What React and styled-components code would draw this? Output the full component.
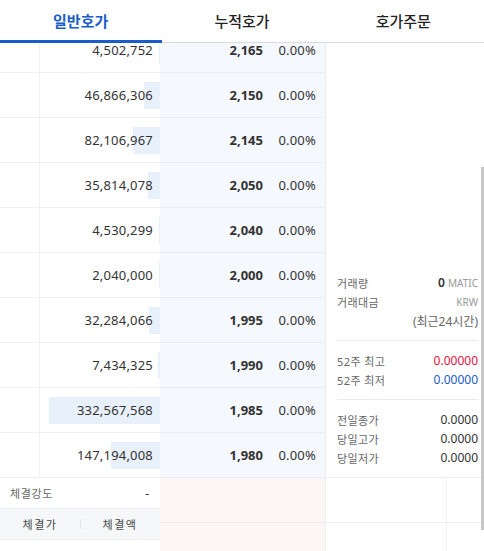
import React from "react";
import styled, { createGlobalStyle } from "styled-components";

const GlobalStyle = createGlobalStyle`
  html, body {
    margin: 0;
    padding: 0;
    background: #fff;
  }
  body {
    font-family: "Noto Sans", "Noto Sans CJK KR", sans-serif;
    color: #333;
  }
`;

const rows = [
  { qty: 4502752, price: "2,165" },
  { qty: 46866306, price: "2,150" },
  { qty: 82106967, price: "2,145" },
  { qty: 35814078, price: "2,050" },
  { qty: 4530299, price: "2,040" },
  { qty: 2040000, price: "2,000" },
  { qty: 32284066, price: "1,995" },
  { qty: 7434325, price: "1,990" },
  { qty: 332567568, price: "1,985" },
  { qty: 147194008, price: "1,980" },
];

const maxQty = Math.max(...rows.map((r) => r.qty));

const App = () => {
  return (
    <Wrap>
      <GlobalStyle />
      <Tabs>
        <Tab active>일반호가</Tab>
        <Tab>누적호가</Tab>
        <Tab>호가주문</Tab>
      </Tabs>

      <Body>
        <AskColumn>
          <List>
            {rows.map((r, i) => (
              <AskRow key={i}>
                <EmptyCell />
                <QtyCell>
                  <Bar style={{ width: `${(r.qty / maxQty) * 111}px` }} />
                  <QtyText>{r.qty.toLocaleString("en-US")}</QtyText>
                </QtyCell>
              </AskRow>
            ))}
          </List>
        </AskColumn>

        <PriceColumn>
          <List>
            {rows.map((r, i) => (
              <PriceRow key={i}>
                <Price>{r.price}</Price>
                <Rate>0.00%</Rate>
              </PriceRow>
            ))}
          </List>
        </PriceColumn>

        <InfoColumn>
          <InfoBlock>
            <InfoLine>
              <Label>거래량</Label>
              <Value>
                <Strong>0</Strong> <Unit>MATIC</Unit>
              </Value>
            </InfoLine>
            <InfoLine>
              <Label>거래대금</Label>
              <Value>
                <Unit>KRW</Unit>
              </Value>
            </InfoLine>
            <InfoLine>
              <span />
              <Note>(최근24시간)</Note>
            </InfoLine>
          </InfoBlock>
          <InfoBlock>
            <InfoLine>
              <Label>52주 최고</Label>
              <Value tone="up">0.00000</Value>
            </InfoLine>
            <InfoLine>
              <Label>52주 최저</Label>
              <Value tone="down">0.00000</Value>
            </InfoLine>
          </InfoBlock>
          <InfoBlock>
            <InfoLine>
              <Label>전일종가</Label>
              <Value>0.0000</Value>
            </InfoLine>
            <InfoLine>
              <Label>당일고가</Label>
              <Value>0.0000</Value>
            </InfoLine>
            <InfoLine>
              <Label>당일저가</Label>
              <Value>0.0000</Value>
            </InfoLine>
          </InfoBlock>
        </InfoColumn>
      </Body>

      <Bottom>
        <TradeColumn>
          <StrengthRow>
            <StrengthLabel>체결강도</StrengthLabel>
            <span>-</span>
          </StrengthRow>
          <TradeHead>
            <HeadCell>체결가</HeadCell>
            <HeadCell divided>체결액</HeadCell>
          </TradeHead>
        </TradeColumn>
        <BidColumn>
          <BidRow />
          <BidRow />
        </BidColumn>
        <SideColumn>
          <SideRow>
            <SideCell />
            <SideCell />
          </SideRow>
          <SideRow>
            <SideCell />
            <SideCell />
          </SideRow>
        </SideColumn>
      </Bottom>

      <ScrollThumb />
    </Wrap>
  );
};

export default App;

const Wrap = styled.div`
  position: relative;
  width: 484px;
  height: 551px;
  overflow: hidden;
  background: #fff;
`;

const Tabs = styled.div`
  display: grid;
  grid-template-columns: repeat(3, 1fr);
  height: 42px;
  border-bottom: 1px solid #d9dbe0;
`;

const Tab = styled.div`
  position: relative;
  display: flex;
  align-items: center;
  justify-content: center;
  padding-bottom: 1px;
  font-size: 15px;
  font-weight: ${(p) => (p.active ? 700 : 500)};
  color: ${(p) => (p.active ? "#1a5cc9" : "#222")};

  &::after {
    content: "";
    display: ${(p) => (p.active ? "block" : "none")};
    position: absolute;
    left: 0;
    right: -1px;
    bottom: -1px;
    height: 3px;
    background: #1a5cc9;
  }
`;

const Body = styled.div`
  display: grid;
  grid-template-columns: 160px 166px 158px;
  height: 435px;
  overflow: hidden;
`;

/* the order book is scrolled a little: the first row sits half under the tabs */
const List = styled.div`
  transform: translateY(-15px);
`;

const AskColumn = styled.div`
  overflow: hidden;
`;

const AskRow = styled.div`
  display: grid;
  grid-template-columns: 40px 120px;
  height: 44px;
  border-bottom: 1px solid #eef0f3;
`;

const EmptyCell = styled.div`
  border-right: 1px solid #eef0f3;
`;

const QtyCell = styled.div`
  position: relative;
  display: flex;
  align-items: center;
  justify-content: flex-end;
  padding-right: 7px;
`;

const Bar = styled.div`
  position: absolute;
  right: 0;
  top: 9px;
  height: 27px;
  background: #e8f0fb;
`;

const QtyText = styled.span`
  position: relative;
  font-size: 13px;
  letter-spacing: 0.2px;
  color: #333;
`;

const PriceColumn = styled.div`
  overflow: hidden;
  background: #f5f8fd;
  border-right: 1px solid #e9edf3;
`;

const PriceRow = styled.div`
  display: grid;
  grid-template-columns: 1fr 62px;
  align-items: center;
  height: 44px;
  border-bottom: 1px solid #e9eef5;
`;

const Price = styled.span`
  text-align: right;
  font-size: 13px;
  font-weight: 700;
  color: #333;
`;

const Rate = styled.span`
  text-align: right;
  padding-right: 9px;
  font-size: 13px;
  letter-spacing: 0.2px;
  color: #333;
`;

const InfoColumn = styled.div`
  display: flex;
  flex-direction: column;
  justify-content: flex-end;
  padding: 0 6px 0 11px;
  border-bottom: 1px solid #eef0f3;
`;

const InfoBlock = styled.div`
  padding: 10px 0;

  & + & {
    border-top: 1px solid #e8eaee;
  }
`;

const InfoLine = styled.div`
  display: flex;
  justify-content: space-between;
  align-items: center;
  height: 19px;
`;

const Label = styled.span`
  font-size: 11px;
  letter-spacing: 0.4px;
  color: #666;
`;

const Value = styled.span`
  font-size: 12px;
  color: ${(p) =>
    p.tone === "up" ? "#e0123e" : p.tone === "down" ? "#1a5cc9" : "#333"};
`;

const Strong = styled.span`
  font-weight: 600;
`;

const Unit = styled.span`
  font-size: 10px;
  color: #999;
`;

const Note = styled.span`
  font-size: 12px;
  color: #666;
`;

const Bottom = styled.div`
  display: grid;
  grid-template-columns: 160px 166px 158px;
  height: 73px;
`;

const TradeColumn = styled.div`
  display: flex;
  flex-direction: column;
`;

const StrengthRow = styled.div`
  display: flex;
  justify-content: space-between;
  align-items: center;
  height: 30px;
  padding: 0 11px 0 10px;
  border-bottom: 1px solid #eef0f3;
  font-size: 12px;
  color: #333;
`;

const StrengthLabel = styled.span`
  font-size: 11px;
  letter-spacing: 0.6px;
  color: #666;
`;

const TradeHead = styled.div`
  display: grid;
  grid-template-columns: 80px 80px;
  align-items: center;
  height: 30px;
  background: #f6f7f9;
  border-bottom: 1px solid #eef0f3;
`;

const HeadCell = styled.span`
  position: relative;
  text-align: center;
  font-size: 11px;
  letter-spacing: 1.5px;
  color: #444;

  &::before {
    content: "";
    display: ${(p) => (p.divided ? "block" : "none")};
    position: absolute;
    left: 0;
    top: 3px;
    height: 10px;
    border-left: 1px solid #e2e4e8;
  }
`;

const BidColumn = styled.div`
  background: #fcf6f6;
  border-right: 1px solid #eef0f3;
`;

const BidRow = styled.div`
  height: 44px;
  border-bottom: 1px solid #f1ebeb;
`;

const SideColumn = styled.div``;

const SideRow = styled.div`
  display: grid;
  grid-template-columns: 120px 1fr;
  height: 44px;
  border-bottom: 1px solid #eef0f3;
`;

const SideCell = styled.div`
  & + & {
    border-left: 1px solid #eef0f3;
  }
`;

const ScrollThumb = styled.div`
  position: absolute;
  right: 0;
  top: 167px;
  width: 3px;
  height: 363px;
  background: #c8c8c8;
`;
